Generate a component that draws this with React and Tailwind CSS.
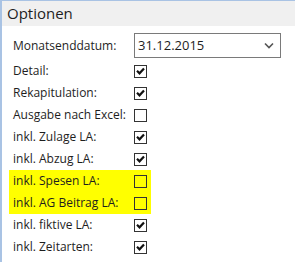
import React from "react";

const rows = [
  ["Detail:", true, false],
  ["Rekapitulation:", true, false],
  ["Ausgabe nach Excel:", false, false],
  ["inkl. Zulage LA:", true, false],
  ["inkl. Abzug LA:", true, false],
  ["inkl. Spesen LA:", false, true],
  ["inkl. AG Beitrag LA:", false, true],
  ["inkl. fiktive LA:", true, false],
  ["inkl. Zeitarten:", true, false],
];

function Box({ checked }) {
  return (
    <div className="w-[13px] h-[13px] border border-[#333333] flex items-center justify-center">
      {checked && (
        <svg width="9" height="8" viewBox="0 0 9 8">
          <path d="M1 3.8 L3.5 6.3 L8 1.5" stroke="#111" strokeWidth="2.2" fill="none" />
        </svg>
      )}
    </div>
  );
}

export default function App() {
  return (
    <div
      className="w-[295px] h-[262px] bg-white border-l-2 border-t border-[#a9c3e4] overflow-hidden"
      style={{ fontFamily: '"Segoe UI", "Open Sans", sans-serif' }}
    >
      <div className="h-[25px] bg-[#f0f0f0] pl-[5px] text-[15px] leading-[25px] text-[#1e1e1e]">
        Optionen
      </div>
      <div className="pt-[7px] text-[12px] text-[#1e1e1e]">
        <div className="flex items-center h-[25px] pl-[11px]">
          <div className="w-[121px]">Monatsenddatum:</div>
          <div className="w-[147px] h-[25px] border border-[#7a7a7a] flex items-center justify-between pl-[3px] pr-[6px] text-[13px]">
            <span>31.12.2015</span>
            <svg width="10" height="7" viewBox="0 0 10 7">
              <path d="M1 1.5 L5 5.5 L9 1.5" stroke="#555" strokeWidth="1.6" fill="none" />
            </svg>
          </div>
        </div>
        <div className="pt-[2px]">
          {rows.map(([label, checked, hl]) => (
            <div key={label} className="flex h-[22px] pl-[7px]">
              <div
                className={
                  "flex items-center w-[142px] " + (hl ? "bg-[#ffff00]" : "")
                }
              >
                <div className="w-[125px] pl-[4px]">{label}</div>
                <Box checked={checked} />
              </div>
            </div>
          ))}
        </div>
      </div>
    </div>
  );
}
